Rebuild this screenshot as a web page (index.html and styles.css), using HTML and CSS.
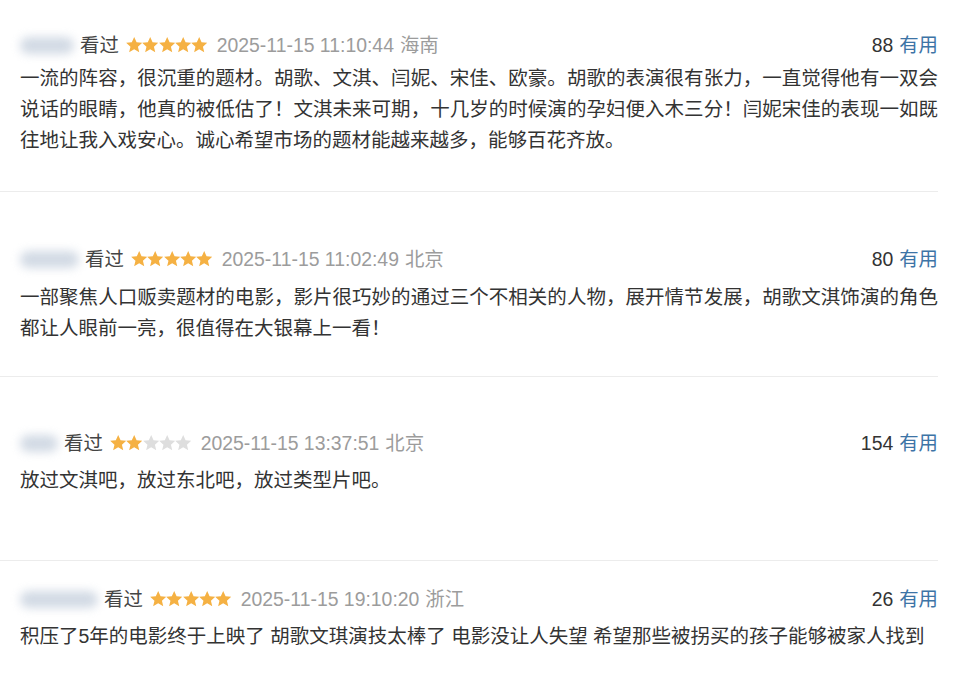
FILE: index.html
```html
<!DOCTYPE html>
<html lang="zh-CN">
<head>
<meta charset="utf-8">
<title>短评</title>
<link rel="stylesheet" href="styles.css">
</head>
<body>
<svg width="0" height="0" class="defs" aria-hidden="true">
  <symbol id="star" viewBox="1 1.2 22 20.6">
    <path d="M12 1.2l3.2 7 7.6.7-5.8 5.1 1.8 7.5L12 17.6l-6.8 3.9 1.8-7.5-5.8-5.1 7.6-.7z"/>
  </symbol>
</svg>
<div class="list">
  <div class="review r1">
    <div class="head">
      <div class="meta">
        <span class="user w1"></span>
        <span class="seen">看过</span>
        <span class="stars"><svg class="on"><use href="#star"/></svg><svg class="on"><use href="#star"/></svg><svg class="on"><use href="#star"/></svg><svg class="on"><use href="#star"/></svg><svg class="on"><use href="#star"/></svg></span>
        <span class="time">2025-11-15 11:10:44</span>
        <span class="loc">海南</span>
      </div>
      <div class="vote"><span class="count">88</span><span class="useful">有用</span></div>
    </div>
    <p class="text"><span class="ln">一流的阵容，很沉重的题材。胡歌、文淇、闫妮、宋佳、欧豪。胡歌的表演很有张力，一直觉得他有一双会</span><span class="ln">说话的眼睛，他真的被低估了！文淇未来可期，十几岁的时候演的孕妇便入木三分！闫妮宋佳的表现一如既</span><span class="ln last">往地让我入戏安心。诚心希望市场的题材能越来越多，能够百花齐放。</span></p>
  </div>
  <div class="review r2">
    <div class="head">
      <div class="meta">
        <span class="user w2"></span>
        <span class="seen">看过</span>
        <span class="stars"><svg class="on"><use href="#star"/></svg><svg class="on"><use href="#star"/></svg><svg class="on"><use href="#star"/></svg><svg class="on"><use href="#star"/></svg><svg class="on"><use href="#star"/></svg></span>
        <span class="time">2025-11-15 11:02:49</span>
        <span class="loc">北京</span>
      </div>
      <div class="vote"><span class="count">80</span><span class="useful">有用</span></div>
    </div>
    <p class="text">一部聚焦人口贩卖题材的电影，影片很巧妙的通过三个不相关的人物，展开情节发展，胡歌文淇饰演的角色都让人眼前一亮，很值得在大银幕上一看！</p>
  </div>
  <div class="review r3">
    <div class="head">
      <div class="meta">
        <span class="user w3"></span>
        <span class="seen">看过</span>
        <span class="stars"><svg class="on"><use href="#star"/></svg><svg class="on"><use href="#star"/></svg><svg class="off"><use href="#star"/></svg><svg class="off"><use href="#star"/></svg><svg class="off"><use href="#star"/></svg></span>
        <span class="time">2025-11-15 13:37:51</span>
        <span class="loc">北京</span>
      </div>
      <div class="vote"><span class="count">154</span><span class="useful">有用</span></div>
    </div>
    <p class="text">放过文淇吧，放过东北吧，放过类型片吧。</p>
  </div>
  <div class="review r4">
    <div class="head">
      <div class="meta">
        <span class="user w4"></span>
        <span class="seen">看过</span>
        <span class="stars"><svg class="on"><use href="#star"/></svg><svg class="on"><use href="#star"/></svg><svg class="on"><use href="#star"/></svg><svg class="on"><use href="#star"/></svg><svg class="on"><use href="#star"/></svg></span>
        <span class="time">2025-11-15 19:10:20</span>
        <span class="loc">浙江</span>
      </div>
      <div class="vote"><span class="count">26</span><span class="useful">有用</span></div>
    </div>
    <p class="text">积压了5年的电影终于上映了 胡歌文琪演技太棒了 电影没让人失望 希望那些被拐买的孩子能够被家人找到</p>
  </div>
</div>
</body>
</html>
```
FILE: styles.css
```css
* { box-sizing: border-box; }
html, body { margin: 0; padding: 0; background: #fff; }
body {
  font-family: "Liberation Sans", "Noto Sans CJK SC", sans-serif;
  color: #333;
  width: 960px;
  height: 676px;
  overflow: hidden;
}
.defs { position: absolute; width: 0; height: 0; }
.list { margin-right: 22px; }
.review {
  padding-left: 20px;
  border-bottom: 1px solid #ececec;
}
.review:last-child { border-bottom: none; }
.r1 { padding-top: 31px; padding-bottom: 35px; }
.r2 { padding-top: 53px; padding-bottom: 32px; }
.r3 { padding-top: 52px; padding-bottom: 64px; }
.r4 { padding-top: 24px; }
.head {
  display: flex;
  justify-content: space-between;
  align-items: center;
  height: 28px;
  font-size: 19.4px;
  line-height: 28px;
}
.meta { display: flex; align-items: center; }
.user {
  display: block;
  height: 17px;
  margin-right: 6px;
  border-radius: 9px;
  background: #c7d1de;
  filter: blur(5px);
  opacity: 0.8;
}
.w1 { width: 54px; }
.w2 { width: 59px; }
.w3 { width: 38px; }
.w4 { width: 78px; }
.seen { color: #444; }
.stars {
  display: flex;
  gap: 0;
  margin-left: 7px;
  margin-right: 9px;
}
.stars svg { width: 16.4px; height: 15.6px; display: block; }
.stars .on { fill: #f5b143; }
.stars .off { fill: #dedede; }
.time { color: #9c9c9c; }
.loc { color: #9c9c9c; margin-left: 6px; }
.vote { display: flex; align-items: center; gap: 6px; }
.count { color: #333; }
.useful { color: #3d74a6; }
.text {
  margin: 0;
  font-size: 19.5px;
  line-height: 31px;
  text-align: justify;
  color: #333;
}
.r1 .text { margin-top: 4px; }
.r2 .text { margin-top: 9px; }
.r3 .text { margin-top: 8px; }
.r4 .text { margin-top: 8px; }
.ln { display: block; text-align: justify; text-align-last: justify; }
.ln.last { text-align-last: left; }
```
